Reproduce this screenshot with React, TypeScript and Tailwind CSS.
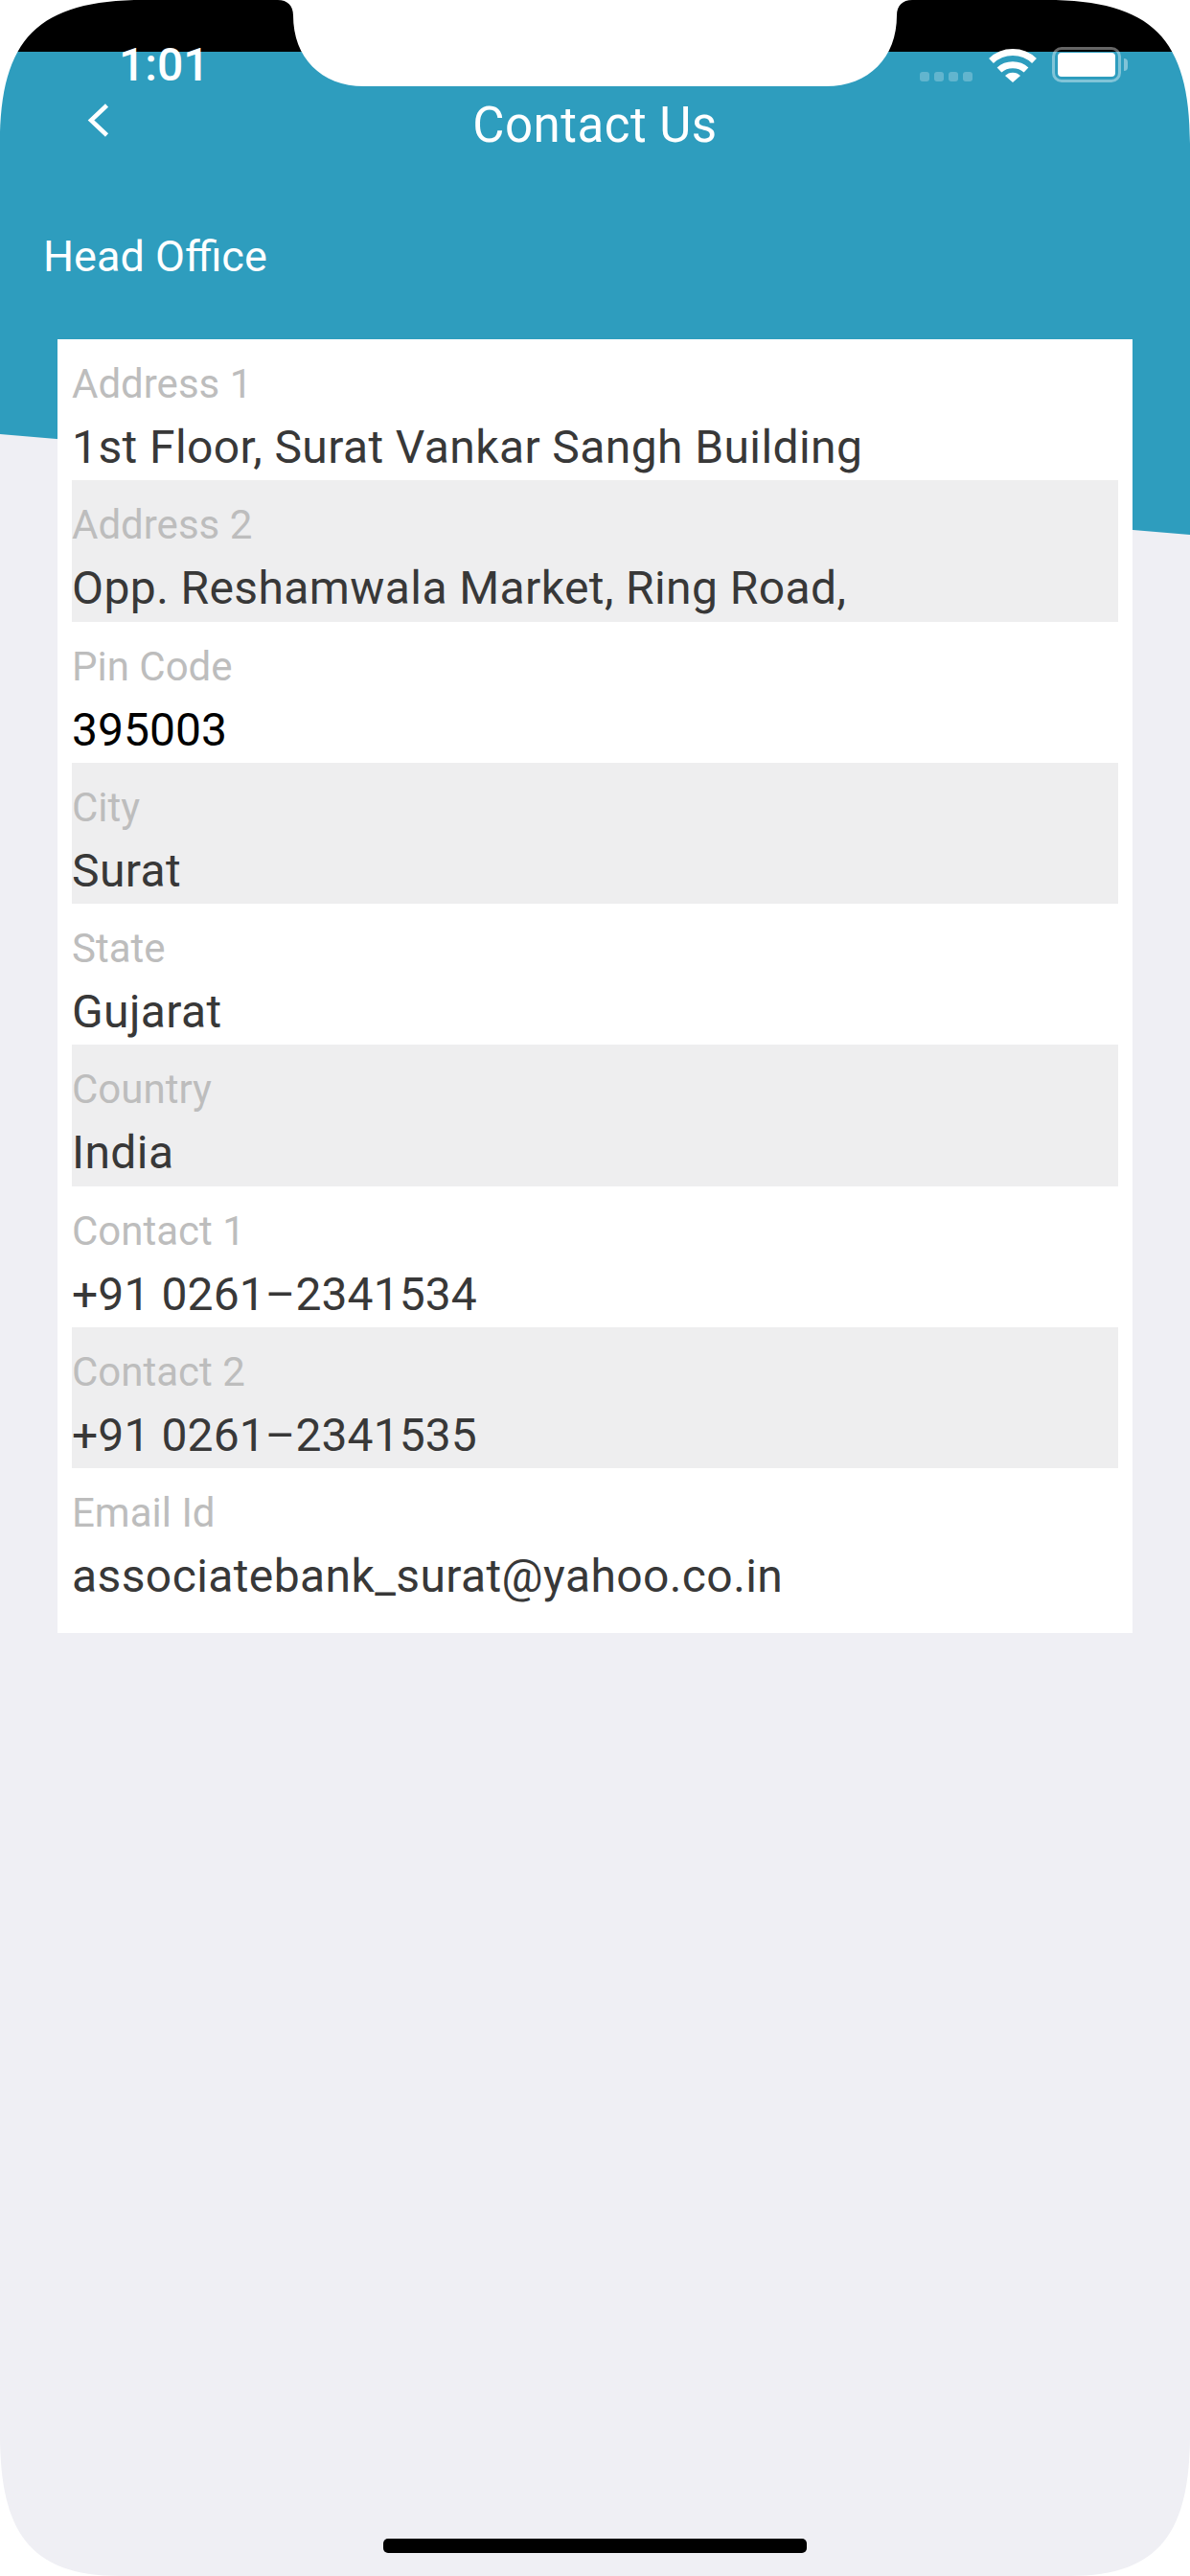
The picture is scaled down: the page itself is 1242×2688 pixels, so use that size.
const rows = [
  { label: "Address 1", value: "1st Floor, Surat Vankar Sangh Building", text: "text-[#383838] tracking-[0.4px]" },
  { label: "Address 2", value: "Opp. Reshamwala Market, Ring Road,", text: "text-[#383838] tracking-[0.4px]" },
  { label: "Pin Code", value: "395003", text: "text-black" },
  { label: "City", value: "Surat", text: "text-[#383838] tracking-[0.4px]" },
  { label: "State", value: "Gujarat", text: "text-[#383838] tracking-[0.4px]" },
  { label: "Country", value: "India", text: "text-[#383838] tracking-[0.4px]" },
  { label: "Contact 1", value: "+91 0261–2341534", text: "text-[#383838] tracking-[0.1px]" },
  { label: "Contact 2", value: "+91 0261–2341535", text: "text-[#383838] tracking-[0.1px]" },
  { label: "Email Id", value: "associatebank_surat@yahoo.co.in", text: "text-[#383838] tracking-[0.4px]" },
];

function Wifi() {
  return (
    <svg width="50" height="36" viewBox="0 0 50 36" fill="none" className="ml-[17px] mt-[10px]">
      <path d="M2.5 13.5C15 1.5 35 1.5 47.5 13.5" stroke="#fff" strokeWidth="7" />
      <path d="M11 23C18.500 16 31.500 16 39 23" stroke="#fff" strokeWidth="7" />
      <path d="M17 29C21 24.500 29 24.500 33 29L25 36Z" fill="#fff" />
    </svg>
  );
}

export default function App() {
  return (
    <div className="relative flex h-[2688px] w-[1242px] flex-col overflow-hidden bg-[#efeff4] font-['Roboto',sans-serif]">
      <div className="absolute inset-x-0 top-0 h-[558px] bg-[#2e9dbe] [clip-path:polygon(0_0,100%_0,100%_100%,0_453px)]" />

      <div className="relative">
        <div className="h-[54px] bg-black" />
        <div className="grid h-[152px] grid-cols-[1fr_auto_1fr] items-start">
          <svg width="30" height="40" viewBox="0 0 30 40" fill="none" className="ml-[88px] mt-[51px]">
            <path d="M23.500 5L7 20.500L23.500 36" stroke="#fff" strokeWidth="4.500" />
          </svg>
          <h1 className="mt-[47px] text-[51px] leading-[60px] font-normal tracking-[0.5px] text-white">Contact Us</h1>
        </div>
        <div className="h-[148px] pl-[45px] pt-[32px] text-[45px] leading-[60px] text-white">Head Office</div>

        <div className="mx-[60px] bg-white px-[15px] pb-[25px]">
          {rows.map((r, i) => (
            <div key={r.label} className={i % 2 === 1 ? "h-[147.25px] bg-[#eeeeef] pt-[22px]" : "h-[147.25px] pt-[22px]"}>
              <div className="text-[42px] leading-[50px] text-[#bdbdbd]">{r.label}</div>
              <div className={"mt-[11px] text-[48px] leading-[60px] " + r.text}>{r.value}</div>
            </div>
          ))}
        </div>
      </div>

      {/* status bar */}
      <div className="absolute inset-x-0 top-[40px] flex items-start pl-[124px] pr-[65px]">
        <div className="text-[48px] leading-[56px] font-medium text-white">1:01</div>
        <div className="ml-auto mt-[35px] flex gap-[5px]">
          <div className="h-[10px] w-[10px] rounded-[3px] bg-white/25" />
          <div className="h-[10px] w-[10px] rounded-[3px] bg-white/25" />
          <div className="h-[10px] w-[10px] rounded-[3px] bg-white/25" />
          <div className="h-[10px] w-[10px] rounded-[3px] bg-white/25" />
        </div>
        <Wifi />
        <div className="ml-[16px] mt-[9px] h-[37px] w-[72px] rounded-[10px] border-[3px] border-white/40 p-[3px]">
          <div className="h-full w-full rounded-[4px] bg-white" />
        </div>
        <div className="ml-[3px] mt-[21px] h-[13px] w-[4px] rounded-r-[4px] bg-white/40" />
      </div>

      {/* device mask: rounded corners and notch */}
      <svg width="1242" height="2688" viewBox="0 0 1242 2688" fill="#fff" className="pointer-events-none absolute left-0 top-0">
        <path d="M0 0H150C40 0 0 40 0 150Z" />
        <path d="M1242 0H1092C1202 0 1242 40 1242 150Z" />
        <path d="M0 2688H125C30 2688 0 2640 0 2540Z" />
        <path d="M1242 2688H1117C1212 2688 1242 2640 1242 2540Z" />
        <path d="M290 0C300 0 306 6 306 16C306 60 335 90 380 90H862C907 90 936 60 936 16C936 6 942 0 952 0Z" />
      </svg>

      <div className="mb-[24px] mt-auto h-[15px] w-[442px] self-center rounded-[5px] bg-black" />
    </div>
  );
}
